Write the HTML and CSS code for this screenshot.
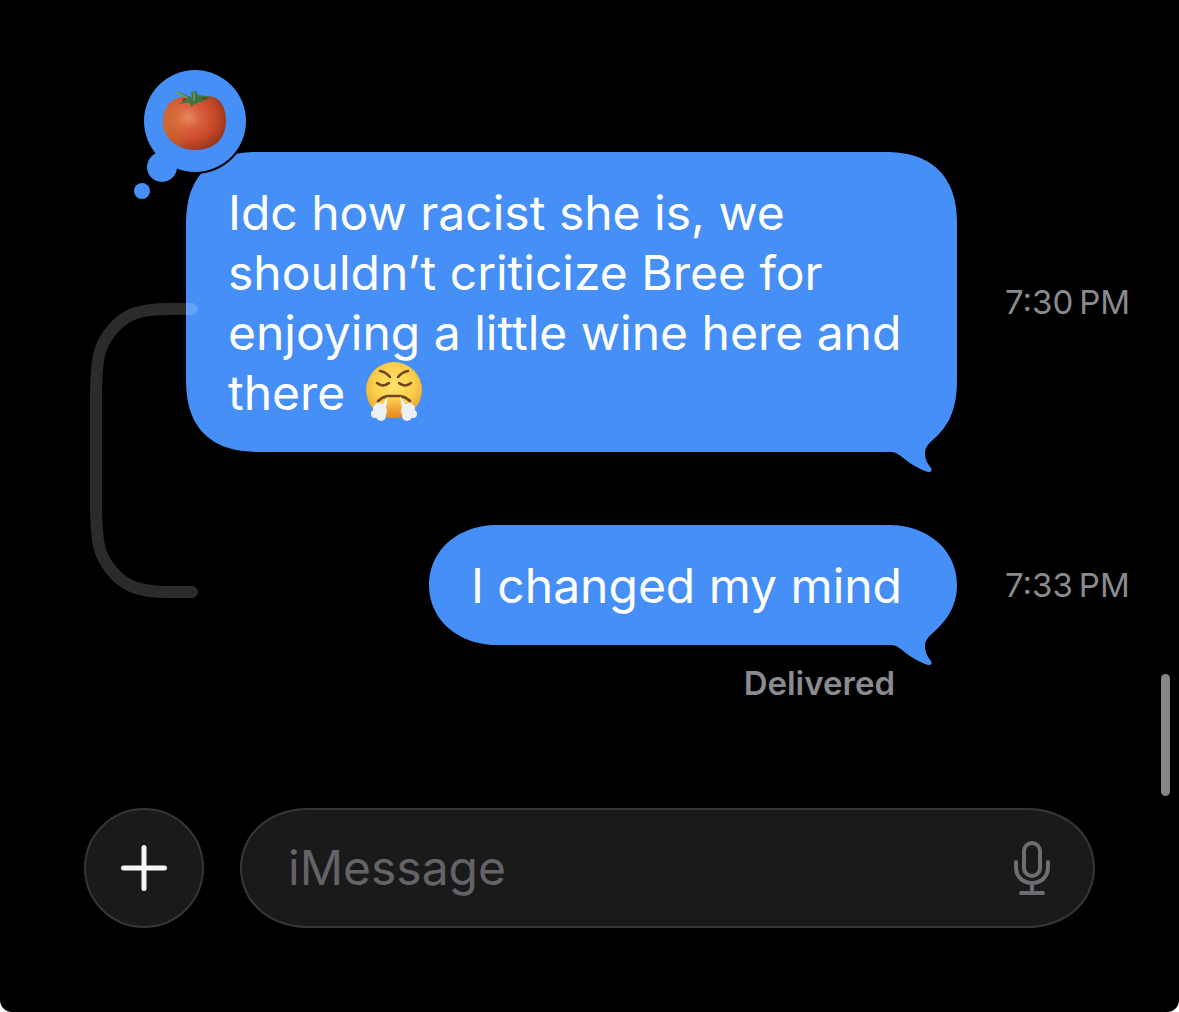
FILE: index.html
```
<!DOCTYPE html>
<html lang="en">
<head>
  <meta charset="UTF-8">
  <meta name="viewport" content="width=device-width, initial-scale=1.0">
  <title>Messages</title>
  <link rel="stylesheet" href="styles.css">
</head>
<body>
  <div class="screen">
    <main class="thread">
      <div class="message">
        <div class="bubble">
          <svg class="reaction" width="120" height="136" viewBox="0 0 120 136" role="img" aria-label="Tomato reaction">
            <defs>
              <radialGradient id="tomato" cx="0.4" cy="0.4" r="0.66">
                <stop offset="0" stop-color="#e98a66"/>
                <stop offset="0.3" stop-color="#d9613e"/>
                <stop offset="0.65" stop-color="#c9482a"/>
                <stop offset="1" stop-color="#94341c"/>
              </radialGradient>
              <linearGradient id="tomato-side">
                <stop offset="0" stop-color="#cf7a34" stop-opacity="0.6"/>
                <stop offset="0.45" stop-color="#d98534" stop-opacity="0"/>
              </linearGradient>
            </defs>
            <circle cx="65" cy="55" r="53" fill="#000"/>
            <g fill="#458ff7">
              <circle cx="65" cy="55" r="51"/>
              <circle cx="32" cy="101" r="15"/>
              <circle cx="12" cy="125" r="8"/>
            </g>
            <path d="M48 32C38 35 33 45 33 56C33 72 47 84 66 84C85 84 96 72 96 55C96 42 91 33 83 31C77 29 69 30 64 32C57 30 53 30 48 32Z" fill="url(#tomato)"/>
            <path d="M48 32C38 35 33 45 33 56C33 72 47 84 66 84C85 84 96 72 96 55C96 42 91 33 83 31C77 29 69 30 64 32C57 30 53 30 48 32Z" fill="url(#tomato-side)"/>
            <path d="M52 34C58 38 69 37 79 32C72 30 57 30 52 34Z" fill="#74301c"/>
            <path d="M44 25C49 26 54 30 57 32L49 38L59 36L62 41L64 37L66 39L68 36L79 34L70 32L83 31L68 29L66 25L61 26L62 31C56 30 51 26 44 25Z" fill="#3f7142"/>
            <path d="M46 26L58 32M64 26L64 35" fill="none" stroke="#68a35b" stroke-width="1.500"/>
          </svg>
          Idc how racist she is, we shouldn’t criticize Bree for enjoying a little wine here and there
          <svg class="emoji" width="60" height="60" viewBox="0 0 60 60" role="img" aria-label="Face with steam from nose">
            <defs>
              <radialGradient id="face" cx="0.5" cy="0.4" r="0.6">
                <stop offset="0" stop-color="#ffe36d"/>
                <stop offset="0.6" stop-color="#fbcf4c"/>
                <stop offset="0.88" stop-color="#eeb139"/>
                <stop offset="1" stop-color="#d99a37"/>
              </radialGradient>
              <linearGradient id="nose" x2="0" y2="1">
                <stop offset="0" stop-color="#ef9f3c" stop-opacity="0"/>
                <stop offset="1" stop-color="#e78928"/>
              </linearGradient>
            </defs>
            <circle cx="29" cy="28" r="28" fill="url(#face)"/>
            <path d="M23 34H35L37 55Q29 57 21 55Z" fill="url(#nose)"/>
            <g fill="none" stroke="#71451a" stroke-width="2.5" stroke-linecap="round">
              <path d="M15 9Q21 10 25 15"/>
              <path d="M43 9Q37 10 33 15"/>
              <path d="M12 21Q18 26 24 21"/>
              <path d="M34 21Q40 26 46 21"/>
              <path d="M13 39Q17 35 23 34H35Q41 35 45 39"/>
            </g>
            <g fill="#edf1f6">
              <path d="M23 34L15 46L20 50Z"/>
              <path d="M35 34L43 46L38 50Z"/>
              <circle cx="14" cy="47" r="6"/>
              <circle cx="10" cy="52" r="4"/>
              <circle cx="16" cy="54" r="5"/>
              <circle cx="18" cy="49" r="4"/>
              <circle cx="44" cy="47" r="6"/>
              <circle cx="48" cy="52" r="4"/>
              <circle cx="42" cy="54" r="5"/>
              <circle cx="40" cy="49" r="4"/>
            </g>
          </svg>
          <svg class="tail" width="56" height="46" viewBox="0 0 56 46" aria-hidden="true">
            <path d="M8 0H54C52 4 50 7 46 11C39 17 35 21 35 27C35 34 38 38 41 42C43 46 39 47 35 45C21 40 11 29 6 27Q4 26 0 26Z" fill="#458ff7"/>
          </svg>
        </div>
        <time class="time" datetime="19:30">7:30&#8239;PM</time>
      </div>
      <div class="message">
        <div class="bubble bubble-short">
          I changed my mind
          <svg class="tail" width="56" height="46" viewBox="0 0 56 46" aria-hidden="true">
            <path d="M8 0H54C52 4 50 7 46 11C39 17 35 21 35 27C35 34 38 38 41 42C43 46 39 47 35 45C21 40 11 29 6 27Q4 26 0 26Z" fill="#458ff7"/>
          </svg>
        </div>
        <time class="time" datetime="19:33">7:33&#8239;PM</time>
      </div>
      <div class="status">Delivered</div>
      <!-- links the reply to the message above it -->
      <svg class="reply-line" width="108" height="295" viewBox="0 0 108 295" aria-hidden="true">
        <path d="M102 6H79C50 6 35 11 22 27C9 42 6 55 6 96V199C6 240 9 253 22 268C35 284 50 289 79 289H102" fill="none" stroke="#fff" stroke-opacity="0.17" stroke-width="12" stroke-linecap="round"/>
      </svg>
    </main>
    <form class="compose">
      <button class="add" type="button" aria-label="Add">
        <svg width="48" height="48" viewBox="0 0 48 48" aria-hidden="true">
          <path d="M24 3.500V44.500M3.500 24H44.500" stroke="#f5f5f5" stroke-width="5" stroke-linecap="round"/>
        </svg>
      </button>
      <div class="field">
        <input class="input" type="text" placeholder="iMessage" aria-label="iMessage">
        <button class="mic" type="button" aria-label="Dictate">
          <svg width="38" height="56" viewBox="0 0 38 56" fill="none" stroke="#6d6d72" stroke-width="4" stroke-linecap="round" aria-hidden="true">
            <rect x="11" y="3" width="16" height="33" rx="8"/>
            <path d="M3 22V27C3 37 10 43 19 43S35 37 35 27V22M19 43V53M8 53H30"/>
          </svg>
        </button>
      </div>
    </form>
    <div class="scrollbar"></div>
  </div>
</body>
</html>
```

FILE: styles.css
```
* {
  box-sizing: border-box;
}

body {
  margin: 0;
  background: #fff;
  font-family: Inter, "Liberation Sans", sans-serif;
}

.screen {
  position: relative;
  display: flex;
  flex-direction: column;
  min-height: 100vh;
  padding: 152px 0 84px;
  background: #000;
  border-radius: 0 0 12px 12px;
}

.thread {
  position: relative;
  flex: 1;
}

.message {
  display: flex;
  align-items: center;
  justify-content: flex-end;
  margin-bottom: 73px;
  padding-right: 48px;
}

.bubble {
  position: relative;
  max-width: 771px;
  padding: 31px 55px 29px 42px;
  background: #458ff7;
  color: #fff;
  font-size: 48px;
  line-height: 60px;
  border-radius: 74px;
  corner-shape: superellipse(1.3);
}

.bubble-short {
  border-radius: 68px / 60px;
  corner-shape: superellipse(1.05);
}

.tail {
  position: absolute;
  right: 11px;
  bottom: -20px;
}

.reaction {
  position: absolute;
  left: -56px;
  top: -86px;
}

.emoji {
  margin-top: -10px;
  margin-left: 6px;
  vertical-align: -12px;
}

.time {
  width: 126px;
  margin-left: 48px;
  color: #8a8a8f;
  font-size: 33px;
  line-height: 40px;
  white-space: nowrap;
}

.message:nth-child(2) {
  margin-bottom: 18px;
}

.status {
  padding-right: 284px;
  color: #8a8a8f;
  font-size: 33px;
  font-weight: 600;
  line-height: 40px;
  text-align: right;
}

.reply-line {
  position: absolute;
  left: 90px;
  top: 151px;
}

.compose {
  display: flex;
  gap: 36px;
  padding: 0 84px;
}

.add,
.field {
  height: 120px;
  background: #1a1a1a;
  border: 2px solid #363636;
  border-radius: 60px;
}

.add {
  display: flex;
  align-items: center;
  justify-content: center;
  flex: none;
  width: 120px;
  padding: 0;
}

.field {
  display: flex;
  align-items: center;
  flex: 1;
  min-width: 0;
  padding: 0 42px 0 46px;
  border-radius: 68px / 60px;
  corner-shape: superellipse(1.05);
}

.input {
  flex: 1;
  min-width: 0;
  padding: 0;
  border: none;
  outline: none;
  background: none;
  color: #fff;
  font-family: inherit;
  font-size: 48px;
  line-height: 60px;
}

.input::placeholder {
  color: #636368;
}

.mic {
  display: flex;
  padding: 0;
  border: none;
  background: none;
}

.scrollbar {
  position: absolute;
  right: 9px;
  top: 674px;
  width: 9px;
  height: 122px;
  background: #858585;
  border-radius: 5px;
}
```
